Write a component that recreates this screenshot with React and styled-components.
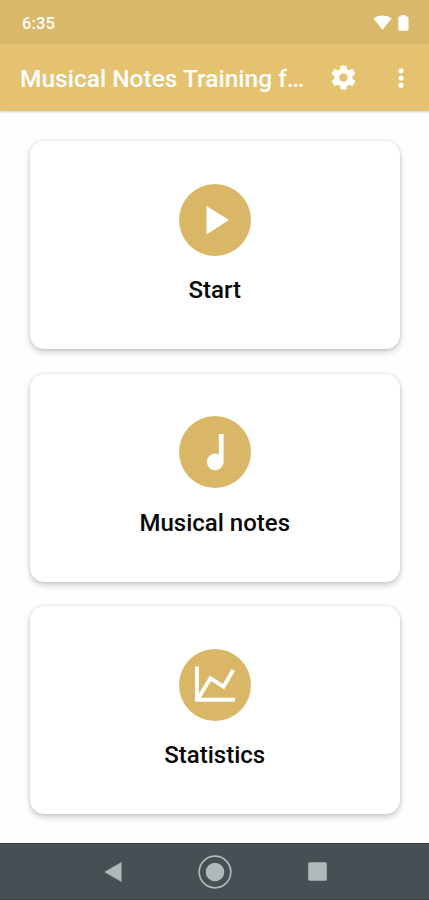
import React from 'react'
import styled, { createGlobalStyle } from 'styled-components'

const GlobalStyle = createGlobalStyle`
  * {
    box-sizing: border-box;
  }

  body {
    margin: 0;
    background-color: #fff;
    font-family: Roboto, 'Liberation Sans', sans-serif;
  }
`

const Screen = styled.div`
  display: flex;
  flex-direction: column;
  width: 429px;
  height: 900px;
  overflow: hidden;
  background-color: #fefefe;
`

const StatusBar = styled.div`
  display: flex;
  align-items: center;
  justify-content: space-between;
  height: 44px;
  padding: 2px 20px 0 22px;
  background-color: #dab869;
  color: #fff;
`

const Time = styled.span`
  font-size: 16.5px;
  font-weight: 500;
  letter-spacing: 0.1px;
`

const StatusIcons = styled.div`
  display: flex;
  gap: 6px;
`

const AppBar = styled.header`
  display: flex;
  align-items: center;
  height: 67px;
  padding: 0 17px 0 20px;
  background-color: #e4c26f;
  color: #fff;
  box-shadow: 0 1px 2px rgba(0, 0, 0, 0.2);
`

const Title = styled.h1`
  flex: 1;
  margin: 0;
  padding-top: 2px;
  font-size: 24.5px;
  font-weight: 500;
  line-height: 30px;
  white-space: nowrap;
`

const Actions = styled.div`
  display: flex;
  align-items: center;
  gap: 32px;
`

const Content = styled.main`
  flex: 1;
  display: flex;
  flex-direction: column;
  gap: 24.5px;
  padding: 30px 29.5px 0 30px;
`

const Card = styled.div`
  display: flex;
  flex-direction: column;
  align-items: center;
  height: 208px;
  padding-top: 42.5px;
  border-radius: 14px;
  background-color: #fff;
  box-shadow: 0 3px 6px rgba(0, 0, 0, 0.2), 0 0 3px rgba(0, 0, 0, 0.13);
  cursor: pointer;
`

const Circle = styled.div`
  width: 72px;
  height: 72px;
  border-radius: 50%;
  background-color: #d9b767;
`

const Label = styled.span`
  margin-top: 19.9px;
  font-size: 24px;
  font-weight: 500;
  line-height: 30px;
  color: #080808;
`

const NavBar = styled.nav`
  display: flex;
  align-items: center;
  justify-content: center;
  gap: 76px;
  height: 57px;
  padding-left: 1px;
  border-top: 1px solid #384145;
  border-bottom: 1px solid #3b4347;
  background-color: #464f54;
  color: #b1b8b9;
`

const WifiIcon = () => (
  <svg width="19" height="16" viewBox="0 0 19 16" fill="currentColor">
    <path d="M0.3 3.5C5.6 -0.6 13.4 -0.6 18.7 3.5L9.5 14.7Z" />
  </svg>
)

const BatteryIcon = () => (
  <svg width="11" height="16" viewBox="0 0 11 16" fill="currentColor">
    <path d="M3 0h4.6v1.6h1.7q1.2 0 1.2 1.2v11.8q0 1.2-1.2 1.2H1.5q-1.2 0-1.2-1.2V2.8q0-1.2 1.2-1.2H3z" />
  </svg>
)

const GearIcon = () => (
  <svg width="29" height="29" viewBox="0 0 24 24" fill="currentColor">
    <path d="M19.43 12.98c.04-.32.07-.64.07-.98s-.03-.66-.07-.98l2.11-1.65c.19-.15.24-.42.12-.64l-2-3.46c-.12-.22-.39-.3-.61-.22l-2.49 1c-.52-.4-1.08-.73-1.69-.98l-.38-2.65C14.46 2.18 14.25 2 14 2h-4c-.25 0-.46.18-.49.42l-.38 2.65c-.61.25-1.17.59-1.69.98l-2.49-1c-.23-.09-.49 0-.61.22l-2 3.46c-.13.22-.07.49.12.64l2.11 1.65c-.04.32-.07.65-.07.98s.03.66.07.98l-2.11 1.65c-.19.15-.24.42-.12.64l2 3.46c.12.22.39.3.61.22l2.49-1c.52.4 1.08.73 1.69.98l.38 2.65c.03.24.24.42.49.42h4c.25 0 .46-.18.49-.42l.38-2.65c.61-.25 1.17-.59 1.69-.98l2.49 1c.23.09.49 0 .61-.22l2-3.46c.12-.22.07-.49-.12-.64l-2.11-1.65zM12 15.5c-1.93 0-3.5-1.57-3.5-3.5s1.57-3.5 3.5-3.5 3.5 1.57 3.5 3.5-1.57 3.5-3.5 3.5z" />
  </svg>
)

const MoreIcon = () => (
  <svg width="22" height="22" viewBox="0 0 22 22" fill="currentColor">
    <circle cx="11" cy="3.8" r="2.6" />
    <circle cx="11" cy="11" r="2.6" />
    <circle cx="11" cy="18.2" r="2.6" />
  </svg>
)

const PlayIcon = () => (
  <svg width="72" height="72" viewBox="0 0 72 72" fill="#fff">
    <path d="M27.5 22v28.5L50 36z" />
  </svg>
)

const NoteIcon = () => (
  <svg width="72" height="72" viewBox="0 0 72 72" fill="#fff">
    <path d="M39.8 18H44.6V46A8.4 8.4 0 1 1 39.8 38.3z" />
  </svg>
)

const ChartIcon = () => (
  <svg width="72" height="72" viewBox="0 0 72 72" fill="none" stroke="#fff" strokeWidth="3.9">
    <path d="M17.9 17.5v33.3H56" />
    <path d="M18.5 50.5L31.5 29.3l13 8.5L54.3 21" />
  </svg>
)

const Nav = () => (
  <NavBar>
    <svg width="18" height="20" viewBox="0 0 18 20" fill="currentColor">
      <path d="M0.8 10L17.2 0.6V19.4z" stroke="currentColor" strokeWidth="0.6" strokeLinejoin="round" />
    </svg>
    <svg width="34" height="34" viewBox="0 0 34 34" fill="currentColor">
      <circle cx="17" cy="17" r="15.8" fill="none" stroke="currentColor" strokeWidth="1.7" />
      <circle cx="17" cy="17" r="9.3" />
    </svg>
    <svg width="19" height="19" viewBox="0 0 19 19" fill="currentColor">
      <rect x="0.2" y="0.2" width="18.6" height="18.6" rx="1.5" />
    </svg>
  </NavBar>
)

const App = () => {
  const listMenu = [
    {
      icon: <PlayIcon />,
      text: 'Start'
    },
    {
      icon: <NoteIcon />,
      text: 'Musical notes'
    },
    {
      icon: <ChartIcon />,
      text: 'Statistics'
    }
  ]
  return (
    <Screen>
      <GlobalStyle />
      <StatusBar>
        <Time>6:35</Time>
        <StatusIcons>
          <WifiIcon />
          <BatteryIcon />
        </StatusIcons>
      </StatusBar>
      <AppBar>
        <Title>Musical Notes Training f…</Title>
        <Actions>
          <GearIcon />
          <MoreIcon />
        </Actions>
      </AppBar>
      <Content>
        {
          listMenu.map((item, index) => {
            return (
              <Card key={index}>
                <Circle>{item.icon}</Circle>
                <Label>{item.text}</Label>
              </Card>
            )
          })
        }
      </Content>
      <Nav />
    </Screen>
  )
}

export default App
